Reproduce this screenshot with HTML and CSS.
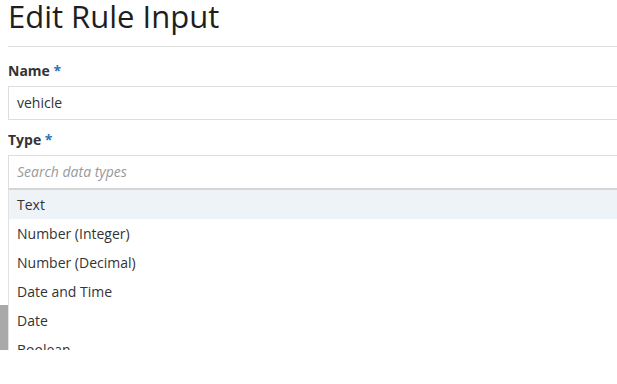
FILE: index.html
```
<!DOCTYPE html>
<html>
<head>
<meta charset="utf-8">
<link rel="stylesheet" href="styles.css">
</head>
<body>
<div class="page">
  <h1 class="title">Edit Rule Input</h1>
  <div class="field">
    <label class="label">Name <span class="req">*</span></label>
    <div class="input">vehicle</div>
  </div>
  <div class="field">
    <label class="label">Type <span class="req">*</span></label>
    <div class="input placeholder">Search data types</div>
    <ul class="menu">
      <li class="item active">Text</li>
      <li class="item">Number (Integer)</li>
      <li class="item">Number (Decimal)</li>
      <li class="item">Date and Time</li>
      <li class="item">Date</li>
      <li class="item">Boolean</li>
    </ul>
  </div>
</div>
<div class="scroll-thumb"></div>
</body>
</html>
```
FILE: styles.css
```
html, body {
  margin: 0;
  padding: 0;
  background: #fff;
  overflow: hidden;
  width: 617px;
  height: 384px;
}
body {
  font-family: "Open Sans", "Liberation Sans", sans-serif;
  color: #333;
  position: relative;
}
.page {
  padding-left: 8px;
  width: 700px;
}
.title {
  margin: 0;
  font-size: 31px;
  line-height: 33px;
  font-weight: 500;
  color: #1e1e1e;
  padding-bottom: 13px;
  border-bottom: 1px solid #ddd;
  margin-bottom: 14px;
}
.field {
  display: flex;
  flex-direction: column;
  margin-bottom: 10px;
}
.label {
  font-size: 14px;
  line-height: 20px;
  font-weight: 700;
  color: #333;
  margin-bottom: 5px;
}
.req {
  color: #2f74b5;
  font-weight: 700;
}
.input {
  box-sizing: border-box;
  height: 34px;
  border: 1px solid #ddd;
  padding: 0 8px;
  font-size: 14px;
  line-height: 32px;
  color: #333;
}
.placeholder {
  font-style: italic;
  color: #999;
  border-bottom-color: #d4d4d4;
}
.menu {
  list-style: none;
  margin: 0;
  padding: 0;
  border-left: 1px solid #e2e2e2;
  border-top: 1px solid #d6d6d6;
  height: 160px;
  overflow: hidden;
}
.item {
  height: 29px;
  line-height: 29px;
  padding-left: 8px;
  font-size: 14px;
  color: #333;
}
.item.active {
  background: #eef3f7;
}
.scroll-thumb {
  position: absolute;
  left: 0;
  top: 305px;
  width: 8px;
  height: 45px;
  background: #a9a9a9;
}
```
